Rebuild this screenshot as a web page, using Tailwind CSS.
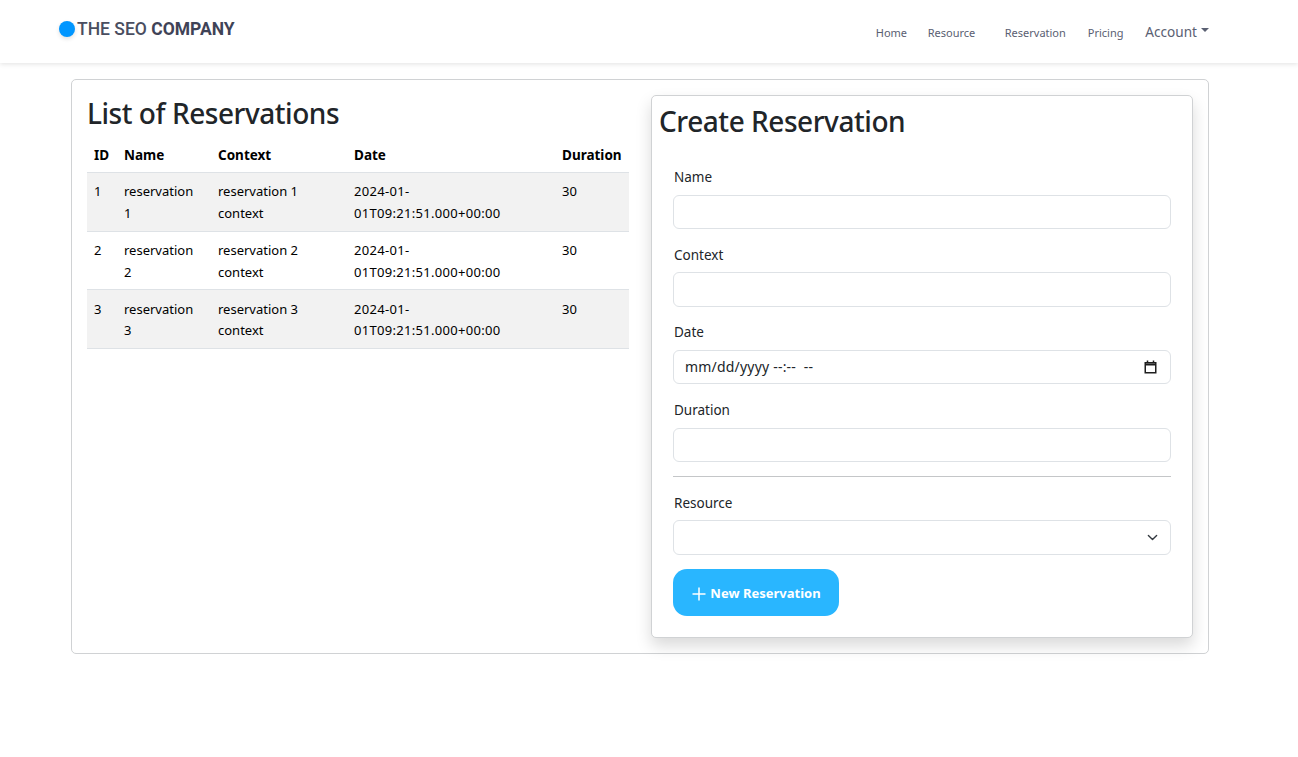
<!DOCTYPE html>
<html lang="en">

<head>
    <meta charset="UTF-8">
    <meta name="viewport" content="width=device-width, initial-scale=1.0">
    <title>Reservations</title>
    <script src="https://cdn.jsdelivr.net/npm/@tailwindcss/browser@4"></script>
</head>

<body class="bg-white min-h-screen font-['Noto_Sans','Open_Sans',sans-serif] text-[#212529]">
    <!-- Navbar -->
    <header class="h-[63px] bg-white shadow-[0_1px_5px_rgba(0,0,0,0.12)] flex items-center pl-[59px] pr-[89px]">
        <a href="#" class="flex items-center mb-[5px]">
            <span class="w-4 h-4 rounded-full bg-[#0096ff] shadow-[0_2px_4px_rgba(0,0,0,0.12)]"></span>
            <span class="ml-[2px] font-['Roboto',sans-serif] text-[17.5px] font-medium text-[#4a4e60]">THE SEO <b class="font-bold text-[#3f4357]">COMPANY</b></span>
        </a>
        <nav class="ml-auto flex items-center text-[#5a6072] text-[11px]">
            <a href="#" class="w-[52px] mt-[3px]">Home</a>
            <a href="#" class="w-[77px] mt-[3px]">Resource</a>
            <a href="#" class="w-[83px] mt-[3px]">Reservation</a>
            <a href="#" class="w-[57.6px] mt-[3px]">Pricing</a>
            <a href="#" class="flex items-center mt-[1px] text-[13.6px]">Account
                <span class="ml-[4px] mb-[3px] border-x-[4.5px] border-x-transparent border-t-[4.5px] border-t-[#5a6072]"></span>
            </a>
        </nav>
    </header>

    <main class="mt-4 mx-[71px] w-[1138px] h-[575px] border border-[#d0d2d4] rounded-[5px] p-[15px] flex gap-[22px]">
        <!-- Reservation list -->
        <section class="w-[542px]">
            <h1 class="text-[28px] tracking-[-0.45px] leading-[36px] font-medium">List of Reservations</h1>
            <table class="mt-[9px] w-[542px] table-fixed text-[13px] text-black">
                <colgroup>
                    <col class="w-[30px]">
                    <col class="w-[94px]">
                    <col class="w-[136px]">
                    <col class="w-[208px]">
                    <col class="w-[74px]">
                </colgroup>
                <thead>
                    <tr class="h-[32px] border-b border-[#dee2e6] text-[13.5px] leading-[21px] font-bold text-left">
                        <th class="px-[7px]">ID</th>
                        <th class="px-[7px]">Name</th>
                        <th class="px-[7px]">Context</th>
                        <th class="px-[7px]">Date</th>
                        <th class="px-[7px]">Duration</th>
                    </tr>
                </thead>
                <tbody class="align-top">
                    <tr class="bg-[#f2f2f2] border-b border-[#dee2e6] leading-[22px]">
                        <td class="px-[7px] pt-[7px] pb-[7px]">1</td>
                        <td class="px-[7px] pt-[7px] pb-[7px]">reservation 1</td>
                        <td class="px-[7px] pt-[7px] pb-[7px]">reservation 1 context</td>
                        <td class="px-[7px] pt-[7px] pb-[7px] tracking-[0.3px]">2024-01-<br>01T09:21:51.000+00:00</td>
                        <td class="px-[7px] pt-[7px] pb-[7px]">30</td>
                    </tr>
                    <tr class="border-b border-[#dee2e6] leading-[22px]">
                        <td class="px-[7px] pt-[7px] pb-[6px]">2</td>
                        <td class="px-[7px] pt-[7px] pb-[6px]">reservation 2</td>
                        <td class="px-[7px] pt-[7px] pb-[6px]">reservation 2 context</td>
                        <td class="px-[7px] pt-[7px] pb-[6px] tracking-[0.3px]">2024-01-<br>01T09:21:51.000+00:00</td>
                        <td class="px-[7px] pt-[7px] pb-[6px]">30</td>
                    </tr>
                    <tr class="bg-[#f2f2f2] border-b border-[#dee2e6] leading-[21px]">
                        <td class="px-[7px] pt-[9px] pb-[7px]">3</td>
                        <td class="px-[7px] pt-[9px] pb-[7px]">reservation 3</td>
                        <td class="px-[7px] pt-[9px] pb-[7px]">reservation 3 context</td>
                        <td class="px-[7px] pt-[9px] pb-[7px] tracking-[0.3px]">2024-01-<br>01T09:21:51.000+00:00</td>
                        <td class="px-[7px] pt-[9px] pb-[7px]">30</td>
                    </tr>
                </tbody>
            </table>
        </section>

        <!-- Create form -->
        <section class="w-[542px] h-[543px] border border-[#d0d2d4] rounded-[5px] shadow-[0_8px_16px_rgba(0,0,0,0.15)] bg-white">
            <h2 class="ml-[7px] mt-[7px] text-[28px] tracking-[-0.45px] leading-[36px] font-medium">Create Reservation</h2>
            <form class="mx-[21px] mt-[28px] text-[13.5px] text-[#212529]">
                <label class="block ml-[1px] leading-[20px]">Name</label>
                <input type="text" class="mt-[8px] block w-full h-[34px] border border-[#dee2e6] rounded-[6px] bg-white">

                <label class="block ml-[1px] mt-[16px] leading-[20px]">Context</label>
                <input type="text" class="mt-[7px] block w-full h-[35px] border border-[#dee2e6] rounded-[6px] bg-white">

                <label class="block ml-[1px] mt-[15px] leading-[20px]">Date</label>
                <div class="relative mt-[8px]">
                    <input type="text" placeholder="mm/dd/yyyy --:--  --" class="block w-full h-[34px] border border-[#dee2e6] rounded-[6px] bg-white px-[11px] pb-[2px] text-[14px] tracking-[0.2px] whitespace-pre placeholder:text-[#212529]">
                    <svg class="absolute right-[14px] top-[10px] w-[13px] h-[14px] pointer-events-none" viewBox="0 0 13 14" fill="none" stroke="#1f1f1f" stroke-width="1.5">
                        <path d="M1.25 2.75h10.5v10H1.25z" />
                        <path d="M1.25 4.5h10.5" stroke-width="2" />
                        <path d="M3.5 0.5v2M9.5 0.5v2" />
                    </svg>
                </div>

                <label class="block ml-[1px] mt-[16px] leading-[20px]">Duration</label>
                <input type="text" class="mt-[8px] block w-full h-[34px] border border-[#dee2e6] rounded-[6px] bg-white">

                <hr class="mt-[14px] border-[#c4c6c8]">

                <label class="block ml-[1px] mt-[16px] leading-[20px]">Resource</label>
                <div class="relative mt-[7px]">
                    <select class="block w-full h-[35px] border border-[#dee2e6] rounded-[6px] bg-white appearance-none"></select>
                    <svg class="absolute right-[13px] top-[12px] w-[11px] h-[11px] pointer-events-none" viewBox="0 0 16 16" fill="none" stroke="#343a40" stroke-width="2" stroke-linecap="round" stroke-linejoin="round">
                        <path d="m2 5 6 6 6-6" />
                    </svg>
                </div>

                <button type="button" class="mt-[14px] w-[166px] h-[47px] pt-[2px] pl-[1px] rounded-[14px] bg-[#29b6ff] text-white font-bold text-[13px] flex items-center justify-center">
                    <svg class="w-[14px] h-[14px] mr-[4px]" viewBox="0 0 14 14" fill="none" stroke="white" stroke-width="1.5">
                        <path d="M7 0.5v13M0.5 7h13" />
                    </svg>
                    New Reservation
                </button>
            </form>
        </section>
    </main>
</body>

</html>
